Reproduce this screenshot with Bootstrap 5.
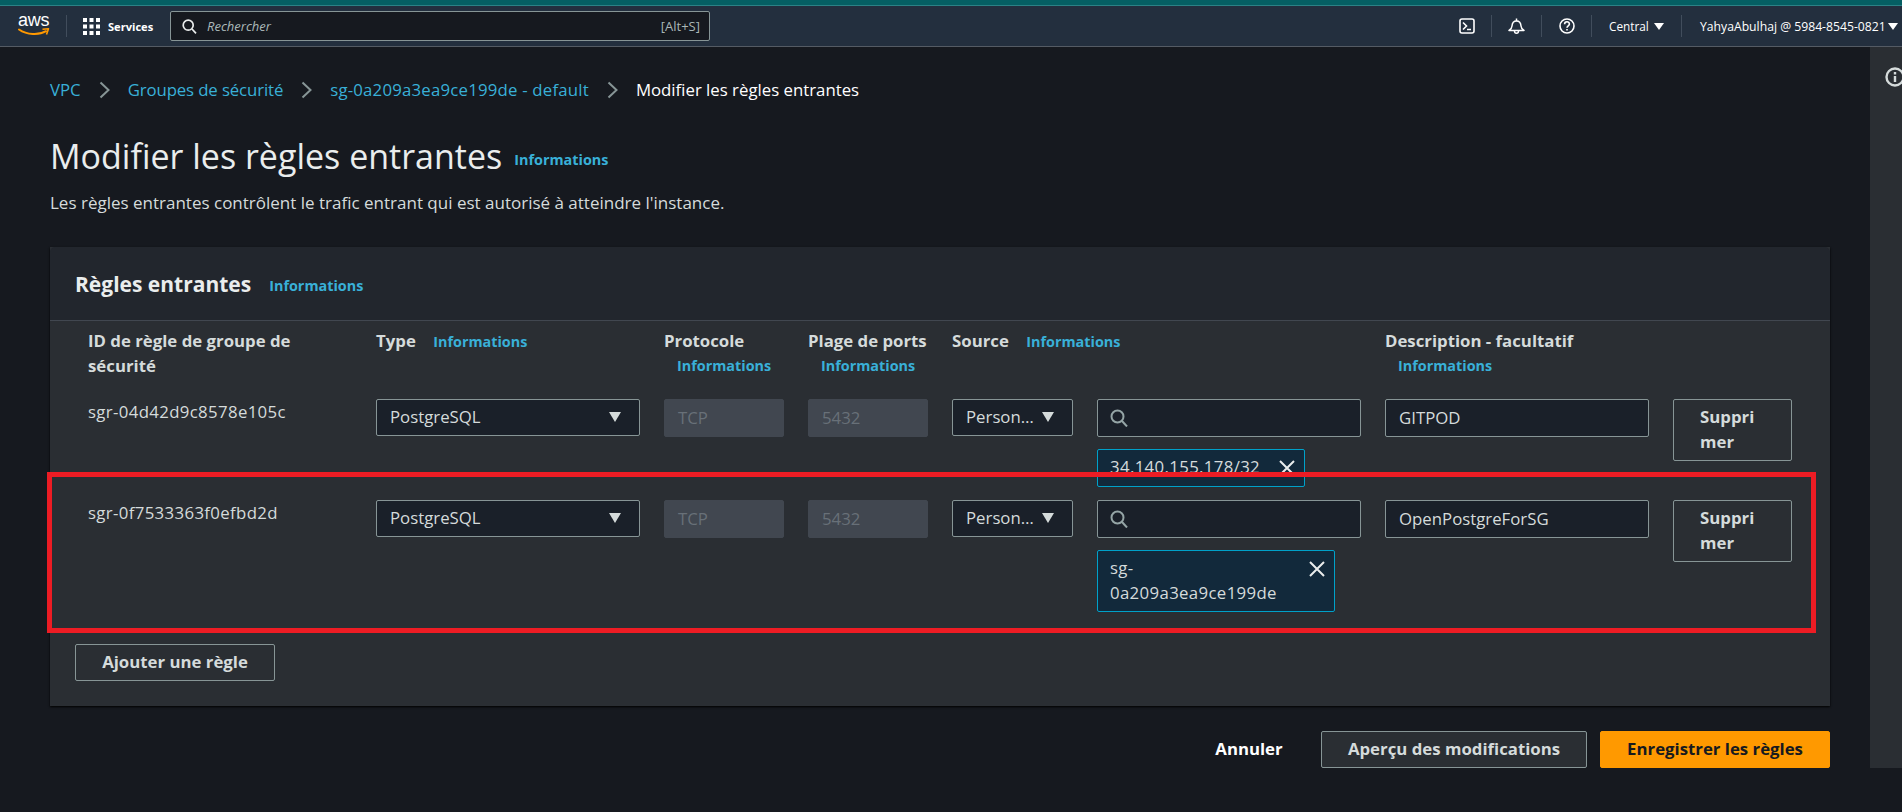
<!DOCTYPE html>
<html lang="fr">
<head>
  <meta charset="UTF-8">
  <meta name="viewport" content="width=device-width, initial-scale=1.0">
  <title>Modifier les règles entrantes</title>
  <link href="https://cdn.jsdelivr.net/npm/bootstrap@5.3.0/dist/css/bootstrap.min.css" rel="stylesheet">
  <style>
    body { height: 812px; overflow: hidden; background: #16191f; color: #d5dbdb; font-family: "Open Sans", "Liberation Sans", sans-serif; font-size: 16.8px; line-height: 25px; }
    a { color: #39b0d8; text-decoration: none; }
    .id-text { letter-spacing: .35px; }

    .top-strip { height: 6px; background: #055f63; border-bottom: 1px solid #2b8286; }
    .top-nav { height: 41px; background: #232f3e; border-bottom: 1px solid #545b64; color: #fff; font-size: 11.8px; padding-left: 18px; }
    .aws-logo { width: 32px; line-height: 1; }
    .aws-logo span { display: block; font: 400 18px/14px "Liberation Sans", sans-serif; letter-spacing: -.2px; height: 14px; margin-top: -2px; }
    .aws-logo svg { display: block; margin-top: 1px; }
    .nav-sep { width: 1px; height: 22px; background: #414d5c; }
    .services { font-weight: 700; font-size: 11.1px; margin-left: 8px; width: 62px; }
    .search-top { width: 540px; height: 30px; background: #16191f; border: 1px solid #879596; border-radius: 2px; padding: 0 9px 0 11px; color: #aab7b8; font-size: 13px; }
    .search-top i { margin-left: 10px; }
    .nav-cell { width: 50px; height: 22px; border-right: 1px solid #414d5c; }
    .region { width: 90px; padding: 0 17px; }
    .account { width: 220px; padding: 0 4px 0 18px; white-space: nowrap; font-size: 12.2px; }
    .tri { display: inline-block; width: 0; height: 0; border-left: 5px solid transparent; border-right: 5px solid transparent; border-top: 7px solid currentColor; }

    .main-area { padding: 30px 40px 0 50px; min-width: 0; }
    .side-rail { width: 32px; background: #2a2e33; overflow: hidden; padding: 15px 0 0 15px; }
    .crumbs { height: 25px; }
    .crumbs svg { margin: 0 18px; }
    .crumbs .crumb-tight { letter-spacing: -.12px; }
    .crumbs .id-text { letter-spacing: .2px; }
    .page-title { font-size: 34px; font-weight: 400; line-height: 40px; margin: 30px 0 0; color: #eaeded; }
    .info-link { font-size: 14.4px; font-weight: 700; }
    .title-info { margin: 8px 0 0 12px; }
    .type-info { margin-left: 13px; }
    .page-desc { margin: 10px 0 32px; height: 25px; font-size: 17px; }

    .rules-card { background: #2a2e33; border: 0; border-radius: 0; box-shadow: 0 1px 2px #000; height: 459px; }
    .rules-head { height: 74px; background: #22262d; border-bottom: 1px solid #414750; padding: 0 25px; border-radius: 0; }
    .rules-head h2 { font-size: 21px; font-weight: 700; margin: 2px 18px 0 0; color: #eaeded; line-height: 25px; }
    .rule-grid { display: grid; grid-template-columns: 264px 264px 120px 120px 121px 264px 264px 119px; column-gap: 24px; padding-left: 38px; }
    .grid-head { padding-top: 7px; height: 78px; font-weight: 700; }
    .col-id { padding-right: 30px; }
    .col-source { grid-column: span 2; }
    .col-desc { grid-column: span 2; }
    .info-under { display: block; padding-left: 13px; }
    .rule-row { height: 101px; }
    .rule-row.tall { height: 145px; }

    .aws-input { height: 38px; width: 100%; background: #1a2029; border: 1px solid #879596; border-radius: 2px; padding: 0 13px 2px; color: #d5dbdb; display: flex; align-items: center; }
    .aws-select { height: 37px; justify-content: space-between; padding-right: 18px; }
    .tri-big { flex: none; width: 0; height: 0; border-left: 6.5px solid transparent; border-right: 6.5px solid transparent; border-top: 10px solid #d5dbdb; }
    .is-off { background: #414750; border-color: #414750; color: #687078; }
    .aws-search { padding: 0 12px; }
    .aws-tag { margin-top: 12px; background: #12293b; border: 1px solid #00a1c9; border-radius: 2px; padding: 4px 8px 6px 12px; display: flex; justify-content: space-between; align-items: flex-start; color: #d5dbdb; }
    .tag-ip { width: 208px; height: 38px; white-space: nowrap; }
    .tag-sg { width: 238px; height: 62px; }
    .aws-tag svg { flex: none; margin-top: 5px; }
    .aws-btn { background: transparent; border: 1px solid #879596; border-radius: 2px; color: #d5dbdb; font-weight: 700; font-size: 16.8px; line-height: 25px; height: 37px; padding: 0 12px 2px; }
    .aws-btn:hover { color: #fff; border-color: #fff; }
    .btn-split { height: 62px; width: 100%; text-align: left; padding: 4px 26px 6px; }
    .add-btn { width: 200px; margin-left: 25px; margin-top: -1px; }
    .foot-actions { margin-top: 25px; gap: 13px; }
    .cancel-btn { border-color: transparent; width: 118px; padding: 0 0 2px; color: #fff; }
    .preview-btn { width: 266px; background: #2a2e33; }
    .save-btn { width: 230px; background: #f90; border-color: #f90; color: #16191f; }
    .save-btn:hover { background: #ec7211; color: #16191f; }
    /* red box drawn over the screenshot */
    .red-frame { position: absolute; left: -3px; top: 225px; width: 1769px; height: 161px; border: 5px solid #ed1c24; pointer-events: none; }
  </style>
</head>
<body>
  <div class="top-strip"></div>
  <nav class="top-nav d-flex align-items-center">
    <a class="aws-logo text-white me-3" href="#">
      <span>aws</span>
      <svg width="32" height="9" viewBox="0 0 32 9"><path d="M1 1.5C9 7 21 7.5 28 3.2" fill="none" stroke="#f90" stroke-width="2" stroke-linecap="round"/><path d="M24.5 1.2 30.5 .8 28.5 6.5" fill="none" stroke="#f90" stroke-width="1.6" stroke-linejoin="round"/></svg>
    </a>
    <div class="nav-sep"></div>
    <svg class="ms-3" width="17" height="17" viewBox="0 0 17 17" fill="#fff"><rect width="4" height="4"/><rect x="6.5" width="4" height="4"/><rect x="13" width="4" height="4"/><rect y="6.5" width="4" height="4"/><rect x="6.5" y="6.5" width="4" height="4"/><rect x="13" y="6.5" width="4" height="4"/><rect y="13" width="4" height="4"/><rect x="6.5" y="13" width="4" height="4"/><rect x="13" y="13" width="4" height="4"/></svg>
    <span class="services">Services</span>
    <div class="search-top d-flex align-items-center">
      <svg width="15" height="15" viewBox="0 0 15 15" fill="none" stroke="#eaeded" stroke-width="1.7"><circle cx="6.2" cy="6.2" r="5"/><path d="M10 10l4 4.4"/></svg>
      <i>Rechercher</i>
      <span class="ms-auto">[Alt+S]</span>
    </div>
    <div class="ms-auto d-flex align-items-center">
      <div class="nav-cell d-flex align-items-center justify-content-center">
        <svg width="16" height="16" viewBox="0 0 16 16" fill="none" stroke="#fff" stroke-width="1.6"><rect x="1" y="1" width="14" height="14" rx="2"/><path d="M4 4.5 7.5 8 4 11.5M8 11.5h4"/></svg>
      </div>
      <div class="nav-cell d-flex align-items-center justify-content-center">
        <svg width="17" height="17" viewBox="0 0 17 17" fill="none" stroke="#fff" stroke-width="1.5"><path d="M1 12.5c1.8-1 2.8-2 3-4.5.2-3 2-5 4.5-5s4.300 2 4.500 5c.2 2.500 1.200 3.500 3 4.500z" stroke-linejoin="round"/><path d="M8.500 .5v2.500M6.500 13c0 3 4 3 4 0"/></svg>
      </div>
      <div class="nav-cell d-flex align-items-center justify-content-center">
        <svg width="16" height="16" viewBox="0 0 16 16" fill="none" stroke="#fff" stroke-width="1.600"><circle cx="8" cy="8" r="7"/><path d="M5.600 6.200c0-3.200 4.800-3.200 4.800-.2 0 1.800-2.400 1.800-2.400 3.700"/><path d="M8 11v1.600"/></svg>
      </div>
      <div class="nav-cell region d-flex align-items-center justify-content-between"><span>Central</span><span class="tri"></span></div>
      <div class="account d-flex align-items-center justify-content-between"><span>YahyaAbulhaj @ 5984-8545-0821</span><span class="tri"></span></div>
    </div>
  </nav>

  <div class="d-flex flex-grow-1">
    <main class="main-area flex-grow-1">
      <div class="crumbs d-flex align-items-center">
        <a href="#">VPC</a>
        <svg width="11" height="18" viewBox="0 0 11 18" fill="none" stroke="#879596" stroke-width="2"><path d="M1.500 1.500 9.500 9l-8 7.500"/></svg>
        <a class="crumb-tight" href="#">Groupes de sécurité</a>
        <svg width="11" height="18" viewBox="0 0 11 18" fill="none" stroke="#879596" stroke-width="2"><path d="M1.500 1.500 9.500 9l-8 7.500"/></svg>
        <a class="id-text" href="#">sg-0a209a3ea9ce199de - default</a>
        <svg width="11" height="18" viewBox="0 0 11 18" fill="none" stroke="#879596" stroke-width="2"><path d="M1.500 1.500 9.500 9l-8 7.500"/></svg>
        <span class="text-white">Modifier les règles entrantes</span>
      </div>
      <h1 class="page-title d-flex align-items-center">Modifier les règles entrantes <a class="info-link title-info" href="#">Informations</a></h1>
      <p class="page-desc">Les règles entrantes contrôlent le trafic entrant qui est autorisé à atteindre l'instance.</p>

      <div class="card rules-card position-relative">
        <div class="card-header rules-head d-flex align-items-center">
          <h2>Règles entrantes</h2>
          <a class="info-link mt-1" href="#">Informations</a>
        </div>

        <div class="rule-grid grid-head">
          <div class="col-id">ID de règle de groupe de sécurité</div>
          <div>Type <a class="info-link type-info" href="#">Informations</a></div>
          <div>Protocole <a class="info-link info-under" href="#">Informations</a></div>
          <div class="text-nowrap">Plage de ports <a class="info-link info-under" href="#">Informations</a></div>
          <div class="col-source">Source <a class="info-link type-info" href="#">Informations</a></div>
          <div class="col-desc">Description - facultatif <a class="info-link info-under" href="#">Informations</a></div>
          <div></div>
        </div>

        <div class="rule-grid rule-row">
          <div class="id-text">sgr-04d42d9c8578e105c</div>
          <div class="aws-input aws-select"><span>PostgreSQL</span><span class="tri-big"></span></div>
          <div class="aws-input is-off">TCP</div>
          <div class="aws-input is-off">5432</div>
          <div class="aws-input aws-select"><span>Person…</span><span class="tri-big"></span></div>
          <div>
            <div class="aws-input aws-search">
              <svg width="18" height="18" viewBox="0 0 18 18" fill="none" stroke="#95a5a6" stroke-width="2"><circle cx="7.500" cy="7.500" r="6"/><path d="M12 12l5 5.500"/></svg>
            </div>
            <div class="aws-tag tag-ip">
              <span class="id-text">34.140.155.178/32</span>
              <svg width="18" height="18" viewBox="0 0 18 18" stroke="#eaeded" stroke-width="2"><path d="M2 2l14 14M16 2 2 16"/></svg>
            </div>
          </div>
          <div class="aws-input">GITPOD</div>
          <button class="aws-btn btn-split" type="button">Suppri<br>mer</button>
        </div>

        <div class="rule-grid rule-row tall">
          <div class="id-text">sgr-0f7533363f0efbd2d</div>
          <div class="aws-input aws-select"><span>PostgreSQL</span><span class="tri-big"></span></div>
          <div class="aws-input is-off">TCP</div>
          <div class="aws-input is-off">5432</div>
          <div class="aws-input aws-select"><span>Person…</span><span class="tri-big"></span></div>
          <div>
            <div class="aws-input aws-search">
              <svg width="18" height="18" viewBox="0 0 18 18" fill="none" stroke="#95a5a6" stroke-width="2"><circle cx="7.500" cy="7.500" r="6"/><path d="M12 12l5 5.500"/></svg>
            </div>
            <div class="aws-tag tag-sg">
              <span class="id-text">sg-<br>0a209a3ea9ce199de</span>
              <svg width="18" height="18" viewBox="0 0 18 18" stroke="#eaeded" stroke-width="2"><path d="M2 2l14 14M16 2 2 16"/></svg>
            </div>
          </div>
          <div class="aws-input">OpenPostgreForSG</div>
          <button class="aws-btn btn-split" type="button">Suppri<br>mer</button>
        </div>

        <div><button class="aws-btn add-btn" type="button">Ajouter une règle</button></div>
        <div class="red-frame"></div>
      </div>

      <div class="foot-actions d-flex justify-content-end align-items-center">
        <button class="aws-btn cancel-btn" type="button">Annuler</button>
        <button class="aws-btn preview-btn" type="button">Aperçu des modifications</button>
        <button class="aws-btn save-btn" type="button">Enregistrer les règles</button>
      </div>
    </main>
    <aside class="side-rail flex-shrink-0">
      <svg width="20" height="20" viewBox="0 0 20 20" fill="none" stroke="#d5dbdb" stroke-width="2.400"><circle cx="10" cy="10" r="8.500"/><path d="M10 9v6M10 5v2.500"/></svg>
    </aside>
  </div>
  <script src="https://cdn.jsdelivr.net/npm/bootstrap@5.3.0/dist/js/bootstrap.bundle.min.js"></script>
</body>
</html>
